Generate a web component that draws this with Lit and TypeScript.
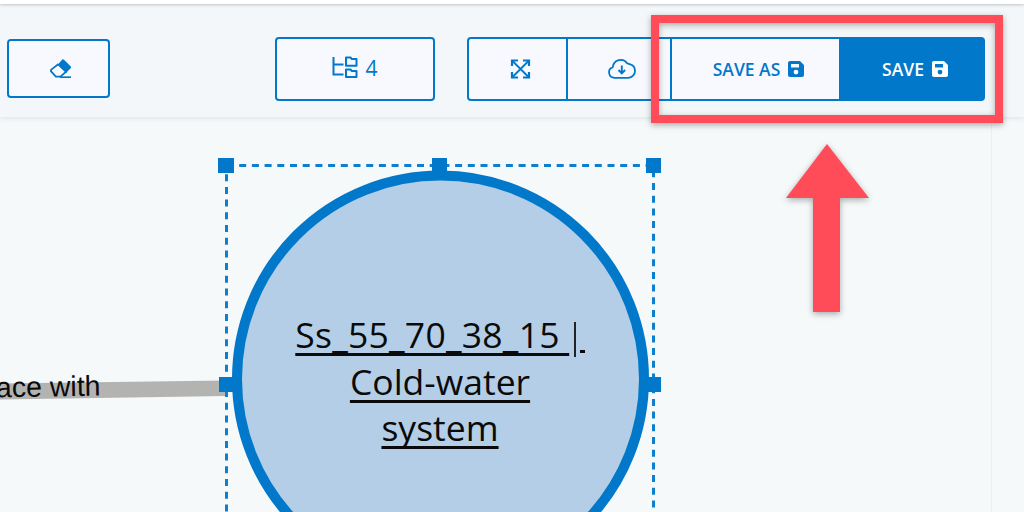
import { LitElement, css, html, svg } from 'lit';
import { customElement } from 'lit/decorators.js';

const eraserIcon = svg`
  <svg class="icon" width="22" height="20" viewBox="0 0 22 20">
    <path d="M7.500 6 12 .8q1-.9 2-.1l6.600 6.600q.8 1 0 2l-4.600 4.700z" fill="currentColor"/>
    <path d="M8.500 5 1.300 10.600q-.9 1 0 2l4.600 5h4.400l6.400-5.400" fill="none" stroke="currentColor" stroke-width="1.800" stroke-linejoin="round"/>
    <path d="M10 18.200h11" stroke="currentColor" stroke-width="1.700"/>
  </svg>`;

const treeIcon = svg`
  <svg class="icon tree-icon" width="26" height="22" viewBox="0 0 26 22" fill="none" stroke="currentColor" stroke-width="2">
    <path d="M1.500 1v17.500h10M1.500 8.500h10"/>
    <path d="M14 1.500h4.500l1.400 1.600h4.600v6.600H14zM14 13.500h4.500l1.400 1.600h4.600v5.900H14z" stroke-linejoin="round"/>
  </svg>`;

const expandIcon = svg`
  <svg class="icon" width="21" height="20" viewBox="0 0 21 20" fill="none" stroke="currentColor" stroke-width="2.200">
    <path d="M2 7V1.500h6M13 1.500h6V7M19 13v5.500h-6M8 18.500H2V13"/>
    <path d="M2.500 2l16 16M18.500 2l-16 16" stroke-width="1.800"/>
  </svg>`;

const cloudIcon = svg`
  <svg class="icon" width="28" height="21" viewBox="0 0 28 21" fill="none" stroke="currentColor" stroke-width="1.800">
    <path d="M7 19.800H6.500A5.500 5.500 0 0 1 4.800 9.100 8 8 0 0 1 19.300 5.400 6.600 6.600 0 0 1 21.500 6.200 7 7 0 0 1 27 13a6.800 6.800 0 0 1-6.500 6.800z" stroke-linejoin="round"/>
    <path d="M13.800 7.500v7.500M10.500 12l3.300 3.300 3.300-3.300" stroke-width="1.900"/>
  </svg>`;

const floppyIcon = svg`
  <svg class="icon" width="16" height="16" viewBox="0 0 16 16">
    <path fill="currentColor" fill-rule="evenodd" d="M2 0h9.500q.6 0 1 .4l3 3q.5.500.5 1.100V14a2 2 0 0 1-2 2H2a2 2 0 0 1-2-2V2a2 2 0 0 1 2-2zM3 3v3.500h8V3zM8 8.700a2.400 2.400 0 1 0 0 4.800 2.400 2.400 0 0 0 0-4.800z"/>
  </svg>`;

@customElement('app-root')
export class AppRoot extends LitElement {
  static styles = css`
    :host {
      display: block;
      --blue: #0178c9;
      --paper: #f8f9ff;
      --red: #ff4c58;
      font-family: 'Open Sans', sans-serif;
    }

    .page {
      position: relative;
      width: 1024px;
      height: 512px;
      overflow: hidden;
      background: #f5f9fa;
      display: flex;
      flex-direction: column;
    }

    .strip {
      height: 4px;
      flex: none;
      background: #ffffff;
      box-shadow: 0 1px 3px rgba(90, 100, 110, 0.35);
      position: relative;
      z-index: 2;
    }

    .toolbar {
      height: 113px;
      flex: none;
      box-sizing: border-box;
      padding: 32px 0 16px 7px;
      display: flex;
      align-items: center;
      background: #f4f7f9;
      box-shadow: 0 1px 5px rgba(90, 100, 110, 0.16);
      position: relative;
      z-index: 1;
    }

    .btn {
      box-sizing: border-box;
      display: flex;
      align-items: center;
      justify-content: center;
      gap: 8px;
      height: 64px;
      color: var(--blue);
      background: var(--paper);
      border: 2px solid var(--blue);
      border-radius: 4px;
    }

    .eraser {
      width: 103px;
      height: 59px;
      padding-left: 4px;
    }

    .tree {
      width: 160px;
      margin-left: 165px;
      gap: 7px;
      font-size: 21px;
      padding-bottom: 2px;
    }

    .tree-icon {
      margin-top: -2px;
    }

    .group {
      display: flex;
      margin-left: 32px;
    }

    .group .btn {
      border-radius: 0;
      border-left: none;
      padding-left: 6px;
      font-size: 17.500px;
      font-weight: 600;
    }

    .group .btn:first-child {
      border-left: 2px solid var(--blue);
      border-radius: 4px 0 0 4px;
    }

    .fit { width: 101px; }
    .cloud { width: 104px; }
    .save-as { width: 169px; }

    .group .btn.save {
      width: 144px;
      color: #ffffff;
      background: var(--blue);
      border-radius: 0 4px 4px 0;
    }

    .icon {
      display: block;
      flex: none;
    }

    .side-edge {
      position: absolute;
      top: 118px;
      bottom: 0;
      left: 991px;
      width: 1px;
      background: #ebeff1;
    }

    .canvas {
      position: absolute;
      inset: 0;
      width: 1024px;
      height: 512px;
    }

    .link-label {
      position: absolute;
      right: 924px;
      top: 371px;
      white-space: nowrap;
      font: 28.500px 'Liberation Sans', Arial, sans-serif;
      color: #0a0a0a;
      transform: rotate(-1deg);
    }

    .node-label {
      position: absolute;
      left: 240px;
      width: 400px;
      top: 311px;
      text-align: center;
      font-size: 35.500px;
      line-height: 46.500px;
      color: #0a0a0a;
      white-space: pre;
    }

    .node-label u {
      text-decoration-thickness: 2.500px;
      text-underline-offset: 5px;
      text-decoration-skip-ink: none;
    }

    .node-label u.code {
      letter-spacing: 0.250px;
    }

    .caret {
      display: inline-block;
      width: 1.500px;
      height: 35px;
      margin: 0 4px 0 5px;
      background: #222222;
      vertical-align: -9px;
    }

    .tail {
      display: inline-block;
      width: 5px;
      height: 3px;
      background: #0a0a0a;
      vertical-align: -5px;
    }

    .notes {
      position: absolute;
      inset: 0;
      width: 1024px;
      height: 512px;
      z-index: 3;
      filter: drop-shadow(0 2px 3px rgba(50, 50, 50, 0.4));
    }
  `;

  render() {
    return html`
      <div class="page">
        <div class="strip"></div>
        <div class="toolbar">
          <div class="btn eraser">${eraserIcon}</div>
          <div class="btn tree">${treeIcon}<span>4</span></div>
          <div class="group">
            <div class="btn fit">${expandIcon}</div>
            <div class="btn cloud">${cloudIcon}</div>
            <div class="btn save-as"><span>SAVE AS</span>${floppyIcon}</div>
            <div class="btn save"><span>SAVE</span>${floppyIcon}</div>
          </div>
        </div>
        <div class="side-edge"></div>

        <svg class="canvas" viewBox="0 0 1024 512">
          <polygon points="-2,383.500 226,380.500 226,396 -2,399.500" fill="#b3b4b2" />
          <rect x="226.500" y="165.500" width="427" height="400" fill="none" stroke="#0c7fce" stroke-width="3" stroke-dasharray="7 5.700" />
          <circle cx="440.500" cy="379" r="203.500" fill="#b3cee6" stroke="#0178c9" stroke-width="10" />
          <g fill="#0178c9">
            <rect x="218" y="158" width="16" height="15" />
            <rect x="432" y="158" width="15" height="15" />
            <rect x="646" y="158" width="15" height="15" />
            <rect x="219" y="377" width="15" height="15" />
            <rect x="647" y="377" width="14" height="15" />
          </g>
        </svg>
        <div class="link-label">Interface with</div>
        <div class="node-label"><u class="code">Ss_55_70_38_15 </u><span class="caret"></span><span class="tail"></span>
<u>Cold-water</u>
<u>system</u></div>

        <svg class="notes" viewBox="0 0 1024 512">
          <rect x="655" y="19" width="344" height="100" fill="none" stroke="#ff4c58" stroke-width="8" />
          <polygon points="827,144 869,198 840,198 840,312 813,312 813,198 786,198" fill="#ff4c58" />
        </svg>
      </div>
    `;
  }
}
